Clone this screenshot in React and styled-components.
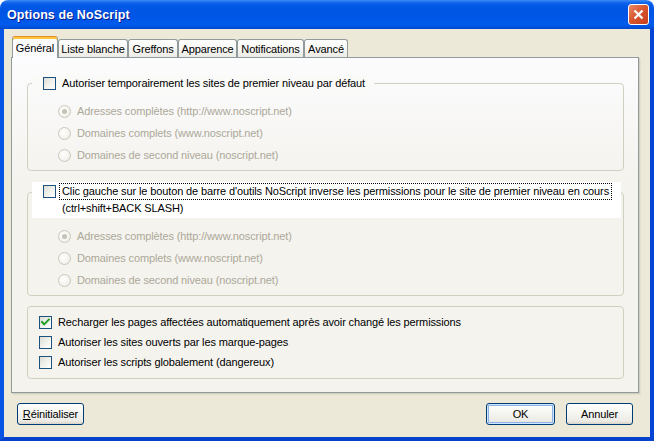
import React from "react";
import styled, { createGlobalStyle } from "styled-components";

const Global = createGlobalStyle`
  html, body { margin: 0; padding: 0; background: #ffffff; }
  body { font-family: "Liberation Sans", Arial, sans-serif; font-size: 11px; color: #000; letter-spacing: -0.12px; }
  * { box-sizing: border-box; }
`;

const Window = styled.div`
  width: 654px;
  height: 441px;
  display: flex;
  flex-direction: column;
  border-radius: 8px 8px 0 0;
  overflow: hidden;
`;

const TitleBar = styled.div`
  height: 29px;
  flex: none;
  display: flex;
  align-items: center;
  justify-content: space-between;
  padding: 0 5px 0 7px;
  background: linear-gradient(
    to bottom,
    #3d8ef6 0px,
    #2a7cf2 1px,
    #0f63ec 3px,
    #0058e6 6px,
    #0055e5 12px,
    #0057e8 20px,
    #005bed 24px,
    #0052df 27px,
    #0046cc 29px
  );
`;

const Title = styled.span`
  font-family: "Liberation Sans", Arial, sans-serif;
  font-weight: bold;
  font-size: 12.5px;
  color: #ffffff;
  text-shadow: 1px 1px 0 #0a1a8a;
  letter-spacing: 0.1px;
`;

const CloseButton = styled.div`
  width: 21px;
  height: 21px;
  border: 1px solid #ffffff;
  border-radius: 3px;
  background: linear-gradient(135deg, #e98b6c 0%, #d9582f 45%, #c4401c 100%);
  display: flex;
  align-items: center;
  justify-content: center;
`;

const Client = styled.div`
  flex: 1;
  display: flex;
  flex-direction: column;
  background: #ece9d8;
  border-left: 4px solid #0754e5;
  border-right: 4px solid #0445d6;
  border-bottom: 4px solid #0442ce;
  padding: 7px 11px 0 7px;
`;

const TabStrip = styled.div`
  height: 22px;
  flex: none;
  display: flex;
  align-items: flex-end;
  padding-left: 1px;
  margin-bottom: -1px;
  position: relative;
  z-index: 1;
`;

const Tab = styled.div`
  width: ${(p) => p.$w}px;
  height: ${(p) => (p.$active ? 22 : 18)}px;
  margin-bottom: ${(p) => (p.$active ? 0 : 1)}px;
  display: flex;
  align-items: center;
  justify-content: center;
  border: 1px solid #919b9c;
  border-bottom: none;
  border-radius: 3px 3px 0 0;
  white-space: nowrap;
  background: ${(p) =>
    p.$active
      ? "#fcfcfe"
      : "linear-gradient(to bottom, #ffffff 0%, #f7f7f4 50%, #ecebe5 100%)"};
  ${(p) =>
    p.$active &&
    `border-top: 1px solid #e68b2c; box-shadow: inset 0 2px 0 #ffc73c; padding-top: 1px;`}
`;

const Panel = styled.div`
  flex: 1;
  display: flex;
  flex-direction: column;
  border: 1px solid #919b9c;
  box-shadow: 1px 1px 0 #d0cebf, 2px 2px 0 #e3e0d0;
  background: linear-gradient(to bottom, #fcfcfe 0%, #f4f3ee 36%, #f4f3ee 100%);
  padding: 0 14px 0 15px;
`;

const GroupBox = styled.div`
  margin-top: ${(p) => p.$mt}px;
  padding: ${(p) => p.$pt || 0}px 0 ${(p) => p.$pb}px 0;
  border: 1px solid #d0d0bf;
  border-radius: 4px;
  display: flex;
  flex-direction: column;
`;

const Caption = styled.div`
  align-self: flex-start;
  margin: ${(p) => -p.$lift}px 0 0 4px;
  padding: ${(p) => p.$pv || 0}px ${(p) => p.$pr}px ${(p) => p.$pv || 0}px 11px;
  background: ${(p) => p.$bg};
  display: flex;
  flex-direction: column;
`;

const CheckLine = styled.div`
  display: flex;
  align-items: center;
`;

const ContinuedLine = styled.div`
  height: 17px;
  line-height: 17px;
  padding-left: 19px;
  white-space: nowrap;
`;

const Box = styled.span`
  width: 13px;
  height: 13px;
  flex: none;
  border: 1px solid #1c5180;
  background: linear-gradient(135deg, #dcdcd7 0%, #efefea 45%, #ffffff 100%);
  display: flex;
  align-items: center;
  justify-content: center;
`;

const Label = styled.span`
  margin-left: 3px;
  padding: 0 2px;
  line-height: 15px;
  white-space: nowrap;
  border: 1px ${(p) => (p.$focus ? "dotted #000000" : "solid transparent")};
`;

const CheckRow = styled.div`
  height: 20px;
  display: flex;
  align-items: center;
  padding-left: 11px;
`;

const RadioRow = styled.div`
  height: 22px;
  display: flex;
  align-items: center;
  padding-left: 30px;
  color: #aca899;
  white-space: nowrap;
`;

const RadioList = styled.div`
  margin-top: ${(p) => p.$mt}px;
  display: flex;
  flex-direction: column;
`;

const Radio = styled.span`
  width: 13px;
  height: 13px;
  flex: none;
  margin-right: 6px;
  border-radius: 50%;
  border: 1px solid #cac8bb;
  background: radial-gradient(circle at 40% 40%, #ffffff 0%, #f5f4ef 55%, #e6e4d9 100%);
  display: flex;
  align-items: center;
  justify-content: center;
  &::after {
    content: "";
    display: ${(p) => (p.$checked ? "block" : "none")};
    width: 5px;
    height: 5px;
    border-radius: 50%;
    background: #c6c4b6;
  }
`;

const Footer = styled.div`
  flex: none;
  display: flex;
  align-items: center;
  padding: 10px 6px 12px 6px;
`;

const Spacer = styled.div`
  flex: 1;
`;

const Button = styled.button`
  width: ${(p) => p.$w}px;
  height: 22px;
  margin-left: ${(p) => p.$ml || 0}px;
  padding: 0;
  font-family: "Liberation Sans", Arial, sans-serif;
  font-size: 11px;
  letter-spacing: -0.12px;
  color: #000000;
  border: 1px solid #003c74;
  border-radius: 3px;
  background: linear-gradient(to bottom, #ffffff 0%, #f6f6f2 40%, #ecebe6 85%, #d8d2c6 100%);
  box-shadow: ${(p) =>
    p.$default ? "inset 0 0 0 1px #cee7ff, inset 0 0 0 2px #8fb1ea" : "none"};
  u {
    text-decoration: underline;
  }
`;

const CheckMark = () => (
  <svg width="11" height="11" viewBox="0 0 11 11">
    <polyline
      points="2,5 4.2,7.4 8.8,2.6"
      fill="none"
      stroke="#21a121"
      strokeWidth="2"
      strokeLinecap="square"
    />
  </svg>
);

const Check = ({ checked }) => <Box>{checked && <CheckMark />}</Box>;

const radios = [
  { label: "Adresses complètes (http://www.noscript.net)", checked: true },
  { label: "Domaines complets (www.noscript.net)", checked: false },
  { label: "Domaines de second niveau (noscript.net)", checked: false },
];

const tabs = [
  { label: "Général", w: 46, active: true },
  { label: "Liste blanche", w: 70 },
  { label: "Greffons", w: 50 },
  { label: "Apparence", w: 59 },
  { label: "Notifications", w: 67 },
  { label: "Avancé", w: 44 },
];

const RadioGroup = ({ mt }) => (
  <RadioList $mt={mt}>
    {radios.map((r) => (
      <RadioRow key={r.label}>
        <Radio $checked={r.checked} />
        {r.label}
      </RadioRow>
    ))}
  </RadioList>
);

export default function App() {
  return (
    <>
      <Global />
      <Window>
        <TitleBar>
          <Title>Options de NoScript</Title>
          <CloseButton>
            <svg width="11" height="11" viewBox="0 0 11 11">
              <path d="M1.5 1.5 L9.5 9.5 M9.5 1.5 L1.5 9.5" stroke="#ffffff" strokeWidth="2.2" />
            </svg>
          </CloseButton>
        </TitleBar>
        <Client>
          <TabStrip>
            {tabs.map((t) => (
              <Tab key={t.label} $w={t.w} $active={t.active}>
                {t.label}
              </Tab>
            ))}
          </TabStrip>
          <Panel>
            <GroupBox $mt={25} $pb={4}>
              <Caption $lift={9} $pr={6} $bg="#fafaf9">
                <CheckLine>
                  <Check />
                  <Label>Autoriser temporairement les sites de premier niveau par défaut</Label>
                </CheckLine>
              </Caption>
              <RadioGroup mt={8} />
            </GroupBox>

            <GroupBox $mt={21} $pb={4}>
              <Caption $lift={11} $pr={9} $pv={1} $bg="#ffffff">
                <CheckLine>
                  <Check />
                  <Label $focus>
                    Clic gauche sur le bouton de barre d'outils NoScript inverse les permissions pour le site de premier niveau en cours
                  </Label>
                </CheckLine>
                <ContinuedLine>(ctrl+shift+BACK SLASH)</ContinuedLine>
              </Caption>
              <RadioGroup mt={7} />
            </GroupBox>

            <GroupBox $mt={10} $pt={5} $pb={6}>
              <CheckRow>
                <Check checked />
                <Label>Recharger les pages affectées automatiquement après avoir changé les permissions</Label>
              </CheckRow>
              <CheckRow>
                <Check />
                <Label>Autoriser les sites ouverts par les marque-pages</Label>
              </CheckRow>
              <CheckRow>
                <Check />
                <Label>Autoriser les scripts globalement (dangereux)</Label>
              </CheckRow>
            </GroupBox>
          </Panel>
          <Footer>
            <Button $w={67}>
              <u>R</u>éinitialiser
            </Button>
            <Spacer />
            <Button $w={69} $default>
              OK
            </Button>
            <Button $w={67} $ml={11}>
              Annuler
            </Button>
          </Footer>
        </Client>
      </Window>
    </>
  );
}
